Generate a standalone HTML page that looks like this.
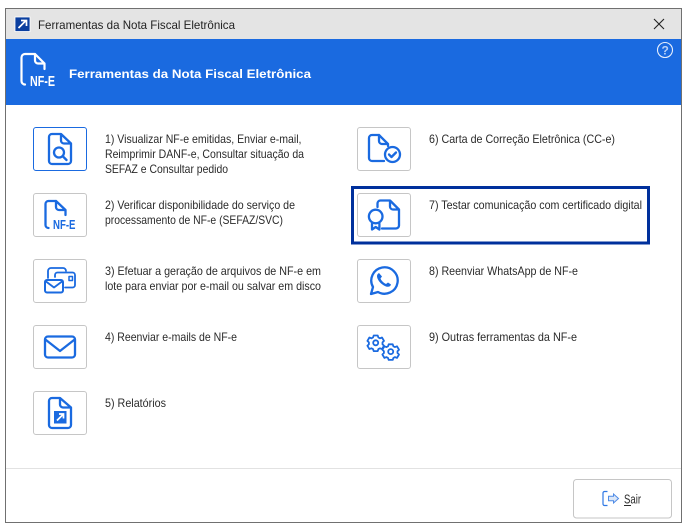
<!DOCTYPE html>
<html lang="pt-BR"><head><meta charset="utf-8"><title>Ferramentas da Nota Fiscal Eletrônica</title>
<style>
html,body{margin:0;padding:0;background:#fff;width:688px;height:532px;overflow:hidden}
svg{position:absolute;left:0;top:0;display:block}
text{font-family:"Liberation Sans",sans-serif;font-size:12px;fill:#2a2a2a}
.i{fill:none;stroke:#1a6ae0;stroke-width:2.300;stroke-linejoin:round;stroke-linecap:round}
.b{fill:#fff;stroke:#c6c6c6;stroke-width:1}
</style></head><body>
<svg width="688" height="532" viewBox="0 0 688 532">
<rect x="5.500" y="8.500" width="676" height="514" fill="#fff" stroke="#707070"/>
<rect x="6" y="9" width="675" height="30" fill="#e4e4e4"/>
<rect x="6" y="39" width="675" height="66" fill="#1a6ae0"/>
<rect x="15" y="17" width="15" height="14.500" fill="#0b3f9f" stroke="#fff" stroke-width=".8"/>
<path d="M18.500 28 L26 20.500 M21 20.500 H26.500 V26" fill="none" stroke="#fff" stroke-width="1.700"/>
<text x="38" y="29" textLength="197" lengthAdjust="spacingAndGlyphs" style="fill:#222">Ferramentas da Nota Fiscal Eletrônica</text>
<path d="M654 19 L664 29 M664 19 L654 29" stroke="#222" stroke-width="1.100" fill="none"/>

<path d="M35 54 H25 a3.500 3.500 0 0 0 -3.500 3.500 V81 a3.500 3.500 0 0 0 3.500 3.500 M35 54 L44.500 63.500 V69 M35 54 V60.500 a3 3 0 0 0 3 3 H44.500" fill="none" stroke="#fff" stroke-width="2.200" stroke-linejoin="round" stroke-linecap="round"/>
<text x="30" y="86" textLength="25" lengthAdjust="spacingAndGlyphs" style="font-size:14.500px;font-weight:700;fill:#fff">NF-E</text>
<text x="69" y="78" textLength="242" lengthAdjust="spacingAndGlyphs" style="font-weight:700;fill:#fff">Ferramentas da Nota Fiscal Eletrônica</text>
<circle cx="665" cy="50" r="7.500" fill="none" stroke="#e6eefc" stroke-width="1.100"/>
<text x="661.500" y="54.500" style="font-size:12px;font-weight:700;fill:#b8d0f7">?</text>

<!-- buttons -->
<rect x="33.500" y="127.500" width="53" height="43" rx="2.500" fill="#fff" stroke="#1a6ae0"/>
<rect class="b" x="33.500" y="193.500" width="53" height="43" rx="2.500"/>
<rect class="b" x="33.500" y="259.500" width="53" height="43" rx="2.500"/>
<rect class="b" x="33.500" y="325.500" width="53" height="43" rx="2.500"/>
<rect class="b" x="33.500" y="391.500" width="53" height="43" rx="2.500"/>
<rect class="b" x="357.500" y="127.500" width="53" height="43" rx="2.500"/>
<rect class="b" x="357.500" y="193.500" width="53" height="43" rx="2.500"/>
<rect class="b" x="357.500" y="259.500" width="53" height="43" rx="2.500"/>
<rect class="b" x="357.500" y="325.500" width="53" height="43" rx="2.500"/>
<rect x="352.500" y="187.500" width="296" height="55.500" fill="none" stroke="#00309c" stroke-width="3"/>

<!-- 1 -->
<path class="i" d="M61 134 H52 a3 3 0 0 0 -3 3 V161 a3 3 0 0 0 3 3 H68 a3 3 0 0 0 3 -3 V143.500 Z M61 134 V140.500 a3 3 0 0 0 3 3 H71"/>
<circle class="i" cx="59" cy="152.500" r="5"/><path class="i" d="M63 156.500 L66.500 160"/>
<!-- 2 -->
<path class="i" d="M56 201 H48.500 a3 3 0 0 0 -3 3 V225 a3 3 0 0 0 3 3 M56 201 L65.500 210 V215 M56 201 V207 a3 3 0 0 0 3 3 H65.500"/>
<text x="53" y="229" textLength="22.500" lengthAdjust="spacingAndGlyphs" style="font-size:13px;font-weight:700;fill:#1a6ae0">NF-E</text>
<!-- 3 -->
<path class="i" style="stroke-width:1.800" d="M48 278 V271 a3 3 0 0 1 3 -3 H63 a3 3 0 0 1 3 3"/>
<path class="i" style="stroke-width:1.800" d="M55 277 V275 a2.500 2.500 0 0 1 2.500 -2.500 H72.500 a2.500 2.500 0 0 1 2.500 2.500 V285 a2.500 2.500 0 0 1 -2.500 2.500 H65"/>
<rect class="i" style="stroke-width:1.500" x="69" y="276.500" width="3.500" height="4"/>
<rect class="i" style="stroke-width:2;fill:#fff" x="45" y="280" width="18" height="12.500" rx="2"/>
<path class="i" style="stroke-width:1.800" d="M46 281.500 L54 287.500 L62 281.500"/>
<!-- 4 -->
<rect class="i" x="45" y="336.500" width="30" height="21" rx="3"/>
<path class="i" d="M46 340 L60 351 L74 340"/>
<!-- 5 -->
<path class="i" d="M60 398 H52 a3 3 0 0 0 -3 3 V425 a3 3 0 0 0 3 3 H68 a3 3 0 0 0 3 -3 V407.500 Z M60 398 V404.500 a3 3 0 0 0 3 3 H71"/>
<path d="M60 398 L71 408 H63 a3 3 0 0 1 -3 -3 Z" fill="#1a6ae0" opacity=".0"/>
<rect x="54" y="411" width="12.500" height="12.500" fill="#1a6ae0"/>
<path d="M57 420.500 L63 414.500 M59 414 H63.500 V418.500" fill="none" stroke="#fff" stroke-width="1.700"/>
<!-- 6 -->
<path class="i" d="M379 135 H372 a3 3 0 0 0 -3 3 V158 a3 3 0 0 0 3 3 H384 M379 135 L388 144 V146 M379 135 V141 a3 3 0 0 0 3 3 H388"/>
<circle class="i" cx="392.500" cy="154.500" r="7.500"/>
<path class="i" d="M389 154.500 L391.500 157 L396 152.500"/>
<!-- 7 -->
<path class="i" d="M377.500 207 V203.500 a3 3 0 0 1 3 -3 H390 L399 209.500 V225.500 a3 3 0 0 1 -3 3 H382 M390 200.500 V206.500 a3 3 0 0 0 3 3 H399"/>
<circle class="i" cx="375.700" cy="216.500" r="6.800"/>
<path class="i" d="M372 223.500 V229.500 L375.700 227 L379.400 229.500 V223.500"/>
<!-- 8 -->
<path class="i" d="M371 294 L373 287 A13.200 13.200 0 1 1 378 292 Z"/>
<path d="M379 273 C377 274 376.500 276 377.500 278.500 C379 282 382 285 386 286.500 C388.500 287.300 390.500 286.500 391 284.500 L388 282.500 L386 284 C383.500 283 381.500 281 380.500 278.500 L382 276.500 Z" fill="#1a6ae0"/>
<!-- 9 -->
<g class="i" style="stroke-width:1.800">
<path d="M373.700 335.500 h4 l.7 2 1.600.8 2 -.8 2 3.400 -1.500 1.500 v1.800 l1.500 1.500 -2 3.400 -2 -.8 -1.600.8 -.7 2 h-4 l-.7 -2 -1.600 -.8 -2 .8 -2 -3.400 1.500 -1.500 v-1.800 l-1.500 -1.500 2 -3.400 2 .8 1.600 -.8 z"/>
<circle cx="375.700" cy="342.800" r="2.500"/>
<path d="M388.700 344.300 h4 l.7 2 1.600.8 2 -.8 2 3.400 -1.500 1.500 v1.800 l1.500 1.500 -2 3.400 -2 -.8 -1.600.8 -.7 2 h-4 l-.7 -2 -1.600 -.8 -2 .8 -2 -3.400 1.500 -1.500 v-1.800 l-1.500 -1.500 2 -3.400 2 .8 1.600 -.8 z"/>
<circle cx="390.700" cy="351.600" r="2.500"/>
</g>

<!-- labels -->
<text x="105" y="143" textLength="196.500" lengthAdjust="spacingAndGlyphs">1) Visualizar NF-e emitidas, Enviar e-mail,</text>
<text x="105" y="158" textLength="199" lengthAdjust="spacingAndGlyphs">Reimprimir DANF-e, Consultar situação da</text>
<text x="105" y="173" textLength="123" lengthAdjust="spacingAndGlyphs">SEFAZ e Consultar pedido</text>
<text x="105" y="209" textLength="190" lengthAdjust="spacingAndGlyphs">2) Verificar disponibilidade do serviço de</text>
<text x="105" y="224" textLength="178" lengthAdjust="spacingAndGlyphs">processamento de NF-e (SEFAZ/SVC)</text>
<text x="105" y="275" textLength="216" lengthAdjust="spacingAndGlyphs">3) Efetuar a geração de arquivos de NF-e em</text>
<text x="105" y="290" textLength="216" lengthAdjust="spacingAndGlyphs">lote para enviar por e-mail ou salvar em disco</text>
<text x="105" y="341" textLength="132" lengthAdjust="spacingAndGlyphs">4) Reenviar e-mails de NF-e</text>
<text x="105" y="407" textLength="61" lengthAdjust="spacingAndGlyphs">5) Relatórios</text>
<text x="429" y="143" textLength="186" lengthAdjust="spacingAndGlyphs">6) Carta de Correção Eletrônica (CC-e)</text>
<text x="429" y="209" textLength="213" lengthAdjust="spacingAndGlyphs">7) Testar comunicação com certificado digital</text>
<text x="429" y="275" textLength="149" lengthAdjust="spacingAndGlyphs">8) Reenviar WhatsApp de NF-e</text>
<text x="429" y="341" textLength="148" lengthAdjust="spacingAndGlyphs">9) Outras ferramentas da NF-e</text>

<!-- footer -->
<rect x="6" y="468" width="675" height="1" fill="#e2e2e2"/>
<rect class="b" x="573.500" y="479.500" width="98" height="38.500" rx="3"/>
<path d="M607.500 491.500 H604.500 a1.500 1.500 0 0 0 -1.500 1.500 V504 a1.500 1.500 0 0 0 1.500 1.500 H607.500" fill="none" stroke="#2f78e4" stroke-width="1.200"/>
<path d="M618.500 498.500 L613.500 494 V496.300 H608.500 V500.700 H613.500 V503 Z" fill="#dbe7f8" stroke="#4f8be6" stroke-width="1"/>
<text x="624" y="503.500" textLength="17" lengthAdjust="spacingAndGlyphs" style="font-size:12.500px">Sair</text>
<rect x="624" y="505" width="7" height="1" fill="#2a2a2a"/>
</svg>
</body></html>
